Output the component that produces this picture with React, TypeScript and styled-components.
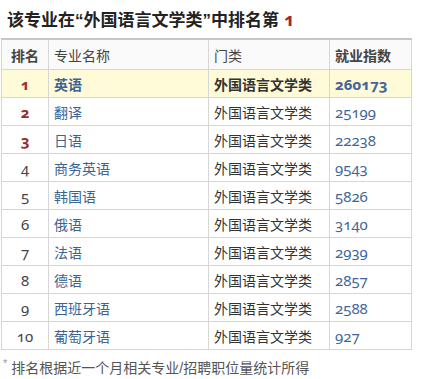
import React from 'react';
import styled, { createGlobalStyle } from 'styled-components';

const GlobalStyle = createGlobalStyle`
  body {
    margin: 0;
    background: #fff;
    font-family: "Liberation Sans", "Noto Sans CJK SC", sans-serif;
  }
`;

const Wrapper = styled.div`
  width: 442px;
  padding: 0 1px;
  box-sizing: border-box;
`;

const Title = styled.h2`
  margin: 0;
  height: 38px;
  padding-left: 6px;
  font-size: 17px;
  line-height: 38px;
  font-weight: bold;
  color: #222;
`;

const TitleRank = styled.span`
  color: #9b2b2b;
  font-family: "Noto Sans", sans-serif;
  font-variant-numeric: oldstyle-nums;
  font-size: 18px;
  margin-left: 5px;
`;

const Table = styled.table`
  width: 410px;
  border-collapse: collapse;
  border-top: 2px solid #c6c6c6;
  font-size: 14px;
  table-layout: fixed;
`;

const HeadCell = styled.th<{ $bold?: boolean; $center?: boolean }>`
  height: 29px;
  padding: 0 5px;
  border: 1px solid #d6d6d6;
  border-top: none;
  background: #fafafa;
  color: #444;
  font-weight: ${p => (p.$bold ? 'bold' : 'normal')};
  text-align: ${p => (p.$center ? 'center' : 'left')};
  font-size: 14px;
`;

const Row = styled.tr<{ $top?: boolean }>`
  background: ${p => (p.$top ? '#fffbd8' : '#fff')};
  font-weight: ${p => (p.$top ? 'bold' : 'normal')};
`;

const Cell = styled.td`
  height: 27px;
  padding: 0 5px;
  border: 1px solid #d6d6d6;
  color: #333;
`;

const RankCell = styled(Cell)<{ $red?: boolean }>`
  text-align: center;
  color: ${p => (p.$red ? '#9b2b2b' : '#444')};
  font-family: "Noto Sans", sans-serif;
  font-variant-numeric: oldstyle-nums;
  font-size: 15px;
  font-weight: ${p => (p.$red ? 'bold' : 'normal')};
`;

const NameCell = styled(Cell)`
  color: #3a6494;
`;

const IndexCell = styled(Cell)`
  color: #3f6799;
  font-family: "Noto Sans", sans-serif;
  font-variant-numeric: oldstyle-nums;
  font-size: 15px;
`;

const Note = styled.p`
  margin: 0;
  padding: 7px 0 0 2px;
  font-size: 14px;
  color: #555;
`;

const Star = styled.span`
  color: #999;
  font-size: 11px;
  vertical-align: top;
  margin-right: 4px;
`;

const rows = [
  { name: '英语', index: '260173' },
  { name: '翻译', index: '25199' },
  { name: '日语', index: '22238' },
  { name: '商务英语', index: '9543' },
  { name: '韩国语', index: '5826' },
  { name: '俄语', index: '3140' },
  { name: '法语', index: '2939' },
  { name: '德语', index: '2857' },
  { name: '西班牙语', index: '2588' },
  { name: '葡萄牙语', index: '927' },
];

const App: React.FC = () => (
  <>
    <GlobalStyle />
    <Wrapper>
      <Title>
        该专业在“外国语言文学类”中排名第<TitleRank>1</TitleRank>
      </Title>
      <Table>
        <colgroup>
          <col style={{ width: 47 }} />
          <col style={{ width: 160 }} />
          <col style={{ width: 121 }} />
          <col style={{ width: 82 }} />
        </colgroup>
        <thead>
          <tr>
            <HeadCell $bold $center>排名</HeadCell>
            <HeadCell>专业名称</HeadCell>
            <HeadCell>门类</HeadCell>
            <HeadCell $bold>就业指数</HeadCell>
          </tr>
        </thead>
        <tbody>
          {rows.map((r, i) => (
            <Row key={r.name} $top={i === 0}>
              <RankCell $red={i < 3}>{i + 1}</RankCell>
              <NameCell>{r.name}</NameCell>
              <Cell>外国语言文学类</Cell>
              <IndexCell>{r.index}</IndexCell>
            </Row>
          ))}
        </tbody>
      </Table>
      <Note>
        <Star>*</Star>排名根据近一个月相关专业/招聘职位量统计所得
      </Note>
    </Wrapper>
  </>
);

export default App;
